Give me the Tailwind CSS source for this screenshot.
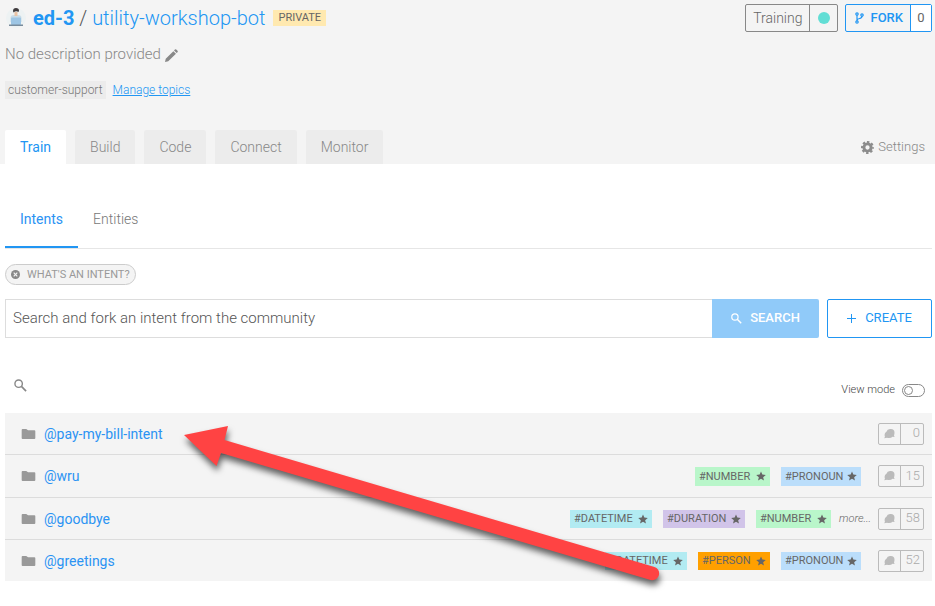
<!DOCTYPE html>
<html lang="en">
<head>
<meta charset="utf-8">
<meta name="viewport" content="width=device-width, initial-scale=1">
<title>ed-3 / utility-workshop-bot</title>
<script src="https://cdn.jsdelivr.net/npm/@tailwindcss/browser@4"></script>
</head>
<body class="bg-white font-['Roboto',sans-serif] text-sm font-light text-[#666]">
<svg class="hidden" aria-hidden="true">
  <symbol id="folder" viewBox="0 0 15 11"><path d="M0 1q0-1 1-1h4l2 1.500h7q1 0 1 1V10q0 1-1 1H1q-1 0-1-1z" fill="currentColor"/></symbol>
  <symbol id="star" viewBox="0 0 24 24"><path d="M12 1l3.200 7.600 8.300.7-6.300 5.400 1.900 8.100L12 18.500l-7.100 4.300 1.900-8.100L.5 9.300l8.300-.7z" fill="currentColor"/></symbol>
  <symbol id="lens" viewBox="0 0 14 14"><circle cx="5" cy="5" r="4" fill="none" stroke="currentColor" stroke-width="1.500"/><path d="M8 8l5 5" fill="none" stroke="currentColor" stroke-width="1.800"/></symbol>
  <symbol id="chat" viewBox="0 0 12 11"><path d="M6.500 0h1Q11.500 0 11.500 4q0 1.800-.6 2.800l.7 2-2.300-.3Q8 10 5.500 10q-1.200 0-2.200-.5L.3 10.300 1 8Q.6 7.400.6 6.300.6 4 2.600 3 3.500 0 6.500 0z" fill="currentColor"/></symbol>
</svg>

<header class="bg-[#f4f4f4] pl-[5px]">
  <div class="flex items-start justify-between pt-1 pr-[3px]">
    <div class="flex h-7 items-center">
      <svg class="ml-px h-5 w-5" viewBox="0 0 20 20" aria-hidden="true">
        <circle cx="10" cy="10" r="10" fill="#edf2f3"/>
        <path d="M4.500 14V10q0-3 3.500-3h4q3.500 0 3.500 3v4z" fill="#c9dce8"/>
        <rect x="8.500" y="4" width="3" height="4" fill="#e9c3a5"/>
        <path d="M7 3q0-3 3-3t3 2.500l-.5 1.500Q10 2.500 7.500 4.500z" fill="#3f3a3c"/>
        <rect x="5" y="9.500" width="10" height="7.500" rx="1" fill="#9dc5e4"/>
        <rect x="3" y="16.500" width="14" height="1.500" fill="#788b9c"/>
      </svg>
      <h1 class="ml-[7px] text-xl font-light text-[#555]"><a href="#" class="font-bold text-[#2196f3]">ed-3</a> / <a href="#" class="text-[#2196f3]">utility-workshop-bot</a></h1>
      <span class="ml-2 bg-[#ffe9b0] px-[5px] text-[11px] leading-4 font-normal">PRIVATE</span>
    </div>
    <div class="flex gap-[7px]">
      <button class="flex h-7 items-center rounded-xs border border-[#888] text-sm text-[#666]">
        <span class="px-[7px]">Training</span>
        <span class="flex h-full w-7 items-center justify-center border-l border-[#888]"><span class="h-3 w-3 rounded-full bg-[#62ded5]"></span></span>
      </button>
      <button class="flex h-7 items-center rounded-xs border border-[#2196f3] text-[#2196f3]">
        <svg class="ml-[9px] h-3 w-[9px]" viewBox="0 0 9 12" fill="none" stroke="currentColor" stroke-width="1.200" aria-hidden="true"><circle cx="2" cy="2" r="1.200"/><circle cx="2" cy="10" r="1.200"/><circle cx="7" cy="3" r="1.200"/><path d="M2 3v6M7 4q0 2-2.500 2.500T2 8.500"/></svg>
        <span class="mr-[7px] ml-[6px] text-[13px] font-medium">FORK</span>
        <span class="flex h-full w-[21px] items-center justify-center border-l border-[#2196f3] bg-white text-[13px] font-normal text-[#666]">0</span>
      </button>
    </div>
  </div>
  <div class="mt-[13px] flex h-5 items-center gap-1 text-[15px] text-[#888]">
    <p>No description provided</p>
    <button aria-label="Edit description"><svg class="h-[13px] w-[13px]" viewBox="0 0 14 14" fill="#888"><path d="M0 14l.8-3.500L9 2.300l2.800 2.800L3.500 13.200zM9.700 1.600l1-1q.7-.6 1.400 0l1.400 1.400q.6.700 0 1.400l-1 1z"/></svg></button>
  </div>
  <div class="mt-4 flex h-[18px] items-center gap-[7px] text-xs">
    <span class="bg-[#ececec] px-[3px] leading-[18px] text-[#777]">customer-support</span>
    <a href="#" class="text-[#2196f3] underline">Manage topics</a>
  </div>
  <div class="mt-[31px] flex items-center justify-between pr-[10px]">
    <nav class="flex gap-[9px] text-sm leading-[34px] text-[#888]">
      <a href="#" class="rounded-t-xs bg-white px-[15px] font-normal text-[#2196f3]">Train</a>
      <a href="#" class="rounded-t-xs bg-[#ececec] px-[15px]">Build</a>
      <a href="#" class="rounded-t-xs bg-[#ececec] px-[15px]">Code</a>
      <a href="#" class="rounded-t-xs bg-[#ececec] px-[15px]">Connect</a>
      <a href="#" class="rounded-t-xs bg-[#ececec] px-[15px]">Monitor</a>
    </nav>
    <a href="#" class="flex items-center gap-1 text-[13px] text-[#888]">
      <svg class="h-[13px] w-[13px]" viewBox="0 0 14 14" fill="none" stroke="#8c8c8c" aria-hidden="true"><circle cx="7" cy="7" r="3.900" stroke-width="3.200"/><circle cx="7" cy="7" r="5.900" stroke-width="2.200" stroke-dasharray="2.600 2.034" stroke-dashoffset="1.300"/></svg>
      Settings
    </a>
  </div>
</header>

<main class="pr-[3px] pb-6 pl-[5px]">
  <nav class="mt-[26px] flex border-b border-[#e6e6e6] text-sm text-[#777]">
    <a href="#" class="-mb-px h-[58px] border-b-2 border-[#2196f3] px-[15px] leading-[58px] font-normal text-[#2b93f3]">Intents</a>
    <a href="#" class="px-[15px] leading-[58px]">Entities</a>
  </nav>
  <button class="mt-[15px] flex h-[21px] items-center gap-[7px] rounded-full border border-[#ccc] bg-[#f4f4f4] px-[5px] text-[11px] font-normal text-[#999]">
    <svg class="h-[9px] w-[9px]" viewBox="0 0 10 10" aria-hidden="true"><circle cx="5" cy="5" r="5" fill="#888"/><path d="M3 3l4 4M7 3l-4 4" stroke="#f4f4f4" stroke-width="1.300"/></svg>
    WHAT'S AN INTENT?
  </button>
  <form class="mt-[14px] flex h-[39px]">
    <input type="text" aria-label="Search intents" placeholder="Search and fork an intent from the community" class="min-w-0 flex-1 border border-r-0 border-[#ddd] bg-white px-[7px] text-[15px] outline-none placeholder:text-[#555]">
    <button type="button" class="flex w-[107px] items-center justify-center gap-2 rounded-r-xs bg-[#90caf9] text-[13px] font-medium text-white"><svg class="h-[11px] w-[11px]" aria-hidden="true"><use href="#lens"/></svg>SEARCH</button>
    <button type="button" class="ml-2 flex w-[105px] items-center justify-center gap-[9px] rounded-xs border border-[#2196f3] text-[13px] font-normal text-[#2196f3]"><svg class="h-[9px] w-[9px]" viewBox="0 0 9 9" stroke="currentColor" aria-hidden="true"><path d="M4.500 0v9M0 4.500h9"/></svg>CREATE</button>
  </form>
  <div class="mt-[39px] flex h-[36px] items-start justify-between pr-[7px]">
    <button aria-label="Filter intents" class="mt-[2px] ml-[9px] text-[#888]"><svg class="h-[13px] w-[13px]"><use href="#lens"/></svg></button>
    <label class="mt-[5px] flex items-center gap-[7px] text-[11px] leading-4 text-[#444]">View mode
      <span class="relative flex"><input type="checkbox" class="peer h-[13px] w-[23px] appearance-none rounded-full border border-[#888]"><span class="pointer-events-none absolute top-[2px] left-[2px] h-[9px] w-[9px] rounded-full border border-[#888] peer-checked:left-3"></span></span>
    </label>
  </div>

  <div class="relative">
    <ul class="divide-y divide-[#dcdcdc] bg-[#f4f4f4] text-[11px] font-normal text-[#666]">
      <li class="flex h-[42px] items-center pr-2 pl-4">
        <svg class="h-[10px] w-[15px] text-[#999]" aria-hidden="true"><use href="#folder"/></svg>
        <a href="#" class="ml-2 text-sm text-[#2b93f3]">@pay-my-bill-intent</a>
        <span class="ml-auto flex h-[22px] w-[46px] items-center rounded-xs border border-[#bbb] text-[13px] font-light text-[#aaa]"><svg class="mx-[5px] h-[10px] w-[11px] text-[#bbb]" aria-hidden="true"><use href="#chat"/></svg><span class="flex h-full flex-1 items-center justify-end border-l border-[#bbb] pr-[3px]">0</span></span>
      </li>
      <li class="flex h-[43px] items-center pr-2 pl-4">
        <svg class="h-[10px] w-[15px] text-[#999]" aria-hidden="true"><use href="#folder"/></svg>
        <a href="#" class="ml-2 text-sm text-[#2b93f3]">@wru</a>
        <div class="mr-[17px] ml-auto flex gap-[11px] leading-[19px]">
          <span class="flex w-[75px] items-center justify-between bg-[#b9f6ca] px-1">#NUMBER<svg class="h-[10px] w-[10px]" aria-hidden="true"><use href="#star"/></svg></span>
          <span class="flex w-[80px] items-center justify-between bg-[#bbdefb] px-1">#PRONOUN<svg class="h-[10px] w-[10px]" aria-hidden="true"><use href="#star"/></svg></span>
        </div>
        <span class="flex h-[22px] w-[46px] items-center rounded-xs border border-[#bbb] text-[13px] font-light text-[#aaa]"><svg class="mx-[5px] h-[10px] w-[11px] text-[#bbb]" aria-hidden="true"><use href="#chat"/></svg><span class="flex h-full flex-1 items-center justify-end border-l border-[#bbb] pr-[3px]">15</span></span>
      </li>
      <li class="flex h-[42px] items-center pr-2 pl-4">
        <svg class="h-[10px] w-[15px] text-[#999]" aria-hidden="true"><use href="#folder"/></svg>
        <a href="#" class="ml-2 text-sm text-[#2b93f3]">@goodbye</a>
        <div class="ml-auto flex gap-[11px] leading-[18px]">
          <span class="flex w-[82px] items-center justify-between bg-[#b2ebf2] px-1">#DATETIME<svg class="h-[10px] w-[10px]" aria-hidden="true"><use href="#star"/></svg></span>
          <span class="flex w-[82px] items-center justify-between bg-[#d1c4e9] px-1">#DURATION<svg class="h-[10px] w-[10px]" aria-hidden="true"><use href="#star"/></svg></span>
          <span class="flex w-[75px] items-center justify-between bg-[#b9f6ca] px-1">#NUMBER<svg class="h-[10px] w-[10px]" aria-hidden="true"><use href="#star"/></svg></span>
        </div>
        <a href="#" class="mr-[7px] ml-2 w-8 font-light italic">more...</a>
        <span class="flex h-[22px] w-[46px] items-center rounded-xs border border-[#bbb] text-[13px] font-light text-[#aaa]"><svg class="mx-[5px] h-[10px] w-[11px] text-[#bbb]" aria-hidden="true"><use href="#chat"/></svg><span class="flex h-full flex-1 items-center justify-end border-l border-[#bbb] pr-[3px]">58</span></span>
      </li>
      <li class="flex h-[41px] items-center pr-2 pl-4">
        <svg class="h-[10px] w-[15px] text-[#999]" aria-hidden="true"><use href="#folder"/></svg>
        <a href="#" class="ml-2 text-sm text-[#2b93f3]">@greetings</a>
        <div class="mr-[17px] ml-auto flex gap-[11px] leading-[18px]">
          <span class="flex w-[82px] items-center justify-between bg-[#b2ebf2] px-1">#DATETIME<svg class="h-[10px] w-[10px]" aria-hidden="true"><use href="#star"/></svg></span>
          <span class="flex w-[72px] items-center justify-between bg-[#ffa000] px-1">#PERSON<svg class="h-[10px] w-[10px]" aria-hidden="true"><use href="#star"/></svg></span>
          <span class="flex w-[80px] items-center justify-between bg-[#bbdefb] px-1">#PRONOUN<svg class="h-[10px] w-[10px]" aria-hidden="true"><use href="#star"/></svg></span>
        </div>
        <span class="flex h-[22px] w-[46px] items-center rounded-xs border border-[#bbb] text-[13px] font-light text-[#aaa]"><svg class="mx-[5px] h-[10px] w-[11px] text-[#bbb]" aria-hidden="true"><use href="#chat"/></svg><span class="flex h-full flex-1 items-center justify-end border-l border-[#bbb] pr-[3px]">52</span></span>
      </li>
    </ul>
    <!-- Callout arrow pointing at the first intent -->
    <svg class="pointer-events-none absolute top-0 left-0 h-[190px] w-[670px] overflow-visible drop-shadow-[1px_5px_3px_rgba(0,0,0,0.6)]" viewBox="5 413 670 190" aria-hidden="true">
      <path d="M184 435L228 426 224.500 440 654.500 567Q660 569 659 575 657 581 650.500 580L221 453 216.500 466z" fill="#ff4343"/>
    </svg>
  </div>
</main>
</body>
</html>
